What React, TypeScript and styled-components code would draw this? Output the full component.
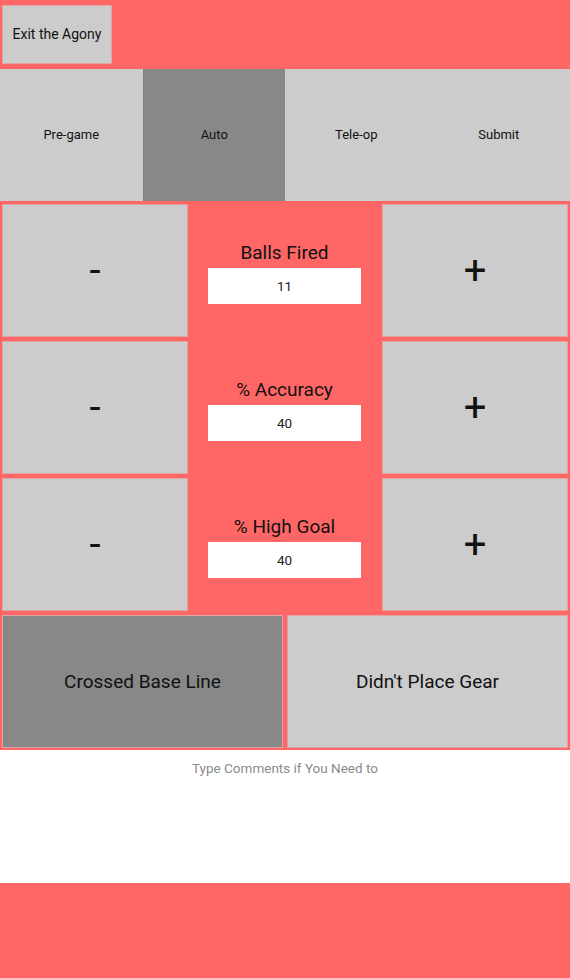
import React, { useState } from "react";
import styled, { createGlobalStyle } from "styled-components";

const RED = "#ff6666";
const GRAY = "#cccccc";
const DARK = "#888888";

const GlobalStyle = createGlobalStyle`
  html, body {
    margin: 0;
    padding: 0;
    height: 100%;
  }
  body {
    font-family: Roboto, "Liberation Sans", sans-serif;
    background: ${RED};
  }
  #root {
    min-height: 100%;
    display: flex;
    flex-direction: column;
  }
  * {
    box-sizing: border-box;
  }
`;

const Page = styled.div`
  flex: 1;
  display: flex;
  flex-direction: column;
  min-height: 100vh;
  background: ${RED};
`;

const TopBar = styled.div`
  height: 69px;
  padding: 5px 2px;
  display: flex;
  align-items: flex-start;
`;

const ExitButton = styled.button`
  width: 110px;
  height: 59px;
  background: ${GRAY};
  border: 1px solid #e3a3a3;
  font-family: inherit;
  font-size: 14px;
  color: #111;
  padding: 0 0 2px;
`;

const Tabs = styled.div`
  display: grid;
  grid-template-columns: repeat(4, 1fr);
  height: 132px;
`;

const Tab = styled.button<{ $active?: boolean }>`
  background: ${(p) => (p.$active ? DARK : GRAY)};
  border: none;
  border-left: ${(p) => (p.$active ? "1px solid #7e7e7e" : "none")};
  font-family: inherit;
  font-size: 13px;
  color: #111;
  padding: 0 0 2px;
`;

const Counters = styled.div`
  display: grid;
  grid-template-columns: repeat(3, 1fr);
  grid-auto-rows: 137px;
  padding-top: 1px;
`;

const Cell = styled.div`
  padding: 2px;
  display: flex;
`;

const BigButton = styled.button<{ $on?: boolean; $size?: number }>`
  flex: 1;
  background: ${(p) => (p.$on ? DARK : GRAY)};
  border: 1px solid #e3a3a3;
  font-family: inherit;
  font-size: ${(p) => p.$size ?? 19}px;
  color: #111;
  padding: 0;
`;

const Middle = styled.div`
  display: flex;
  flex-direction: column;
  align-items: center;
  justify-content: center;
  gap: 3px;
  padding: 4px 1px 0 0;
`;

const Label = styled.div`
  font-size: 19px;
  line-height: 24px;
  color: #111;
`;

const NumberInput = styled.input`
  width: 153px;
  height: 36px;
  border: none;
  outline: none;
  background: #fff;
  text-align: center;
  font-family: inherit;
  font-size: 13.5px;
  color: #222;
`;

const Toggles = styled.div`
  display: grid;
  grid-template-columns: 1fr 1fr;
  height: 137px;
`;

const Comments = styled.textarea`
  height: 133px;
  border: none;
  outline: none;
  resize: none;
  background: #fff;
  text-align: center;
  font-family: inherit;
  font-size: 13.5px;
  padding: 10px 8px;
  color: #222;
  &::placeholder {
    color: #8a8a8a;
  }
`;

const Footer = styled.div`
  flex: 1;
  background: ${RED};
`;

const counters = [
  { label: "Balls Fired", value: 11 },
  { label: "% Accuracy", value: 40 },
  { label: "% High Goal", value: 40 },
];

const tabs = ["Pre-game", "Auto", "Tele-op", "Submit"];

export default function App() {
  const [values, setValues] = useState(counters.map((c) => c.value));
  const [crossed, setCrossed] = useState(true);
  const [gear, setGear] = useState(false);

  const bump = (i: number, d: number) =>
    setValues((v) => v.map((x, j) => (j === i ? Math.max(0, x + d) : x)));

  return (
    <Page>
      <GlobalStyle />
      <TopBar>
        <ExitButton>Exit the Agony</ExitButton>
      </TopBar>
      <Tabs>
        {tabs.map((t) => (
          <Tab key={t} $active={t === "Auto"}>
            {t}
          </Tab>
        ))}
      </Tabs>
      <Counters>
        {counters.map((c, i) => (
          <React.Fragment key={c.label}>
            <Cell>
              <BigButton $size={40} onClick={() => bump(i, -1)}>
                -
              </BigButton>
            </Cell>
            <Middle>
              <Label>{c.label}</Label>
              <NumberInput
                value={values[i]}
                onChange={(e) =>
                  setValues((v) =>
                    v.map((x, j) => (j === i ? Number(e.target.value) || 0 : x))
                  )
                }
              />
            </Middle>
            <Cell>
              <BigButton $size={40} onClick={() => bump(i, 1)}>
                +
              </BigButton>
            </Cell>
          </React.Fragment>
        ))}
      </Counters>
      <Toggles>
        <Cell>
          <BigButton $on={crossed} onClick={() => setCrossed(!crossed)}>
            Crossed Base Line
          </BigButton>
        </Cell>
        <Cell>
          <BigButton $on={gear} onClick={() => setGear(!gear)}>
            {gear ? "Placed Gear" : "Didn't Place Gear"}
          </BigButton>
        </Cell>
      </Toggles>
      <Comments placeholder="Type Comments if You Need to" />
      <Footer />
    </Page>
  );
}
